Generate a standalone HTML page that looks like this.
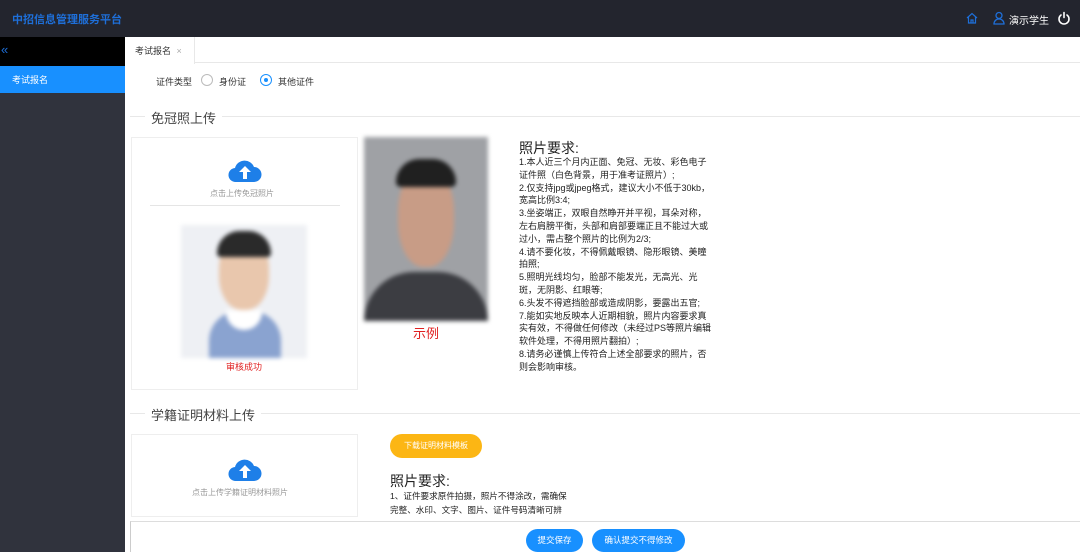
<!DOCTYPE html>
<html><head><meta charset="utf-8"><style>
*{margin:0;padding:0;box-sizing:border-box}
body{width:1080px;height:552px;overflow:hidden;background:#fff;font-family:"Liberation Sans","Noto Sans CJK SC",sans-serif;position:relative;font-size:9px;color:#333}
.a{position:absolute}
</style></head><body>
<div class="a" style="left:0;top:0;width:1080px;height:37px;background:#23252e"></div>
<div class="a" style="left:12px;top:11px;color:#1e6fd9;font-size:11px;font-weight:bold">中招信息管理服务平台</div>
<svg class="a" style="left:965px;top:11px" width="14" height="14" viewBox="0 0 14 14"><path d="M2 7L7 2.5 12 7M3.5 6v6h7V6M6 12V9h2v3" fill="none" stroke="#1e6fd9" stroke-width="1.2"/></svg>
<svg class="a" style="left:993px;top:11px" width="12" height="14" viewBox="0 0 12 14"><circle cx="6" cy="4.5" r="3" fill="none" stroke="#1e6fd9" stroke-width="1.3"/><path d="M1 13c0-3 2.2-5 5-5s5 2 5 5z" fill="none" stroke="#1e6fd9" stroke-width="1.3"/></svg>
<div class="a" style="left:1009px;top:12px;color:#fff;font-size:10px">演示学生</div>
<svg class="a" style="left:1057px;top:11px" width="14" height="14" viewBox="0 0 14 14"><path d="M4 4a5 5 0 1 0 6 0M7 1.5v5" fill="none" stroke="#fff" stroke-width="1.6" stroke-linecap="round"/></svg>
<div class="a" style="left:0;top:37px;width:125px;height:515px;background:#30333d"></div>
<div class="a" style="left:0;top:37px;width:125px;height:29px;background:#000"></div>
<div class="a" style="left:1px;top:42px;color:#1e6fd9;font-size:13px">«</div>
<div class="a" style="left:0;top:66px;width:125px;height:27px;background:#1890ff;color:#fff;padding:7px 12px;font-size:9px">考试报名</div>
<div class="a" style="left:125px;top:37px;width:955px;height:26px;border-bottom:1px solid #e8e8e8"></div>
<div class="a" style="left:125px;top:37px;width:70px;height:27px;background:#fff;border-right:1px solid #e8e8e8;padding:7px 10px;font-size:9px">考试报名 <span style="color:#aaa;margin-left:3px">×</span></div>
<div class="a" style="left:156px;top:75px;font-size:9px">证件类型</div>
<div class="a" style="left:201px;top:74px;width:12px;height:12px;border:1px solid #bbb;border-radius:50%"></div>
<div class="a" style="left:219px;top:75px">身份证</div>
<div class="a" style="left:260px;top:74px;width:12px;height:12px;border:1px solid #1890ff;border-radius:50%"><div style="width:4px;height:4px;background:#1890ff;border-radius:50%;margin:3px"></div></div>
<div class="a" style="left:278px;top:75px">其他证件</div>
<div class="a" style="left:130px;top:116px;width:950px;border-top:1px solid #e8e8e8"></div>
<div class="a" style="left:145px;top:108px;background:#fff;padding:0 6px;font-size:13px;color:#444">免冠照上传</div>
<div class="a" style="left:131px;top:137px;width:227px;height:253px;border:1px solid #eee"></div>
<svg class="a" style="left:228px;top:158px" width="34" height="26" viewBox="0 0 34 26"><path d="M8 24a7 7 0 0 1-1-14 10 10 0 0 1 19-1 7.5 7.5 0 0 1 0 15z" fill="#1e7fe8"/><path d="M17 8l-6 6h4v7h4v-7h4z" fill="#fff"/></svg>
<div class="a" style="left:210px;top:188px;color:#999;font-size:8px">点击上传免冠照片</div>
<div class="a" style="left:150px;top:205px;width:190px;border-top:1px solid #e5e5e5"></div>
<div class="a" style="left:181px;top:225px;width:126px;height:133px;background:#eef0f4;overflow:hidden;filter:blur(2px)">
<div class="a" style="left:28px;top:86px;width:72px;height:60px;background:#8aa3d0;border-radius:30px 30px 0 0"></div>
<div class="a" style="left:45px;top:85px;width:36px;height:20px;background:#fff;border-radius:0 0 18px 18px"></div>
<div class="a" style="left:38px;top:10px;width:50px;height:75px;background:#e9c7ad;border-radius:45%"></div>
<div class="a" style="left:36px;top:6px;width:54px;height:26px;background:#2a2a2a;border-radius:26px 26px 4px 4px"></div>
</div>
<div class="a" style="left:226px;top:360px;color:#e02020;font-size:9px">审核成功</div>
<div class="a" style="left:364px;top:137px;width:124px;height:184px;background:#9fa1a5;overflow:hidden;filter:blur(2px)">
<div class="a" style="left:0;top:135px;width:124px;height:60px;background:#3c3d42;border-radius:50px 50px 0 0"></div>
<div class="a" style="left:34px;top:30px;width:56px;height:100px;background:#c89c86;border-radius:45%"></div>
<div class="a" style="left:32px;top:22px;width:60px;height:28px;background:#202020;border-radius:30px 30px 6px 6px"></div>
</div>
<div class="a" style="left:413px;top:323px;color:#e02020;font-size:13px">示例</div>
<div class="a" style="left:519px;top:138px;font-size:14px;color:#222">照片要求:</div>
<div class="a" style="left:519px;top:156px;white-space:nowrap;font-size:9px;line-height:12.8px;color:#222">1.本人近三个月内正面、免冠、无妆、彩色电子<br>证件照（白色背景，用于准考证照片）;<br>2.仅支持jpg或jpeg格式，建议大小不低于30kb，<br>宽高比例3:4;<br>3.坐姿端正，双眼自然睁开并平视，耳朵对称，<br>左右肩膀平衡，头部和肩部要端正且不能过大或<br>过小，需占整个照片的比例为2/3;<br>4.请不要化妆，不得佩戴眼镜、隐形眼镜、美瞳<br>拍照;<br>5.照明光线均匀，脸部不能发光，无高光、光<br>斑，无阴影、红眼等;<br>6.头发不得遮挡脸部或造成阴影，要露出五官;<br>7.能如实地反映本人近期相貌，照片内容要求真<br>实有效，不得做任何修改（未经过PS等照片编辑<br>软件处理，不得用照片翻拍）;<br>8.请务必谨慎上传符合上述全部要求的照片，否<br>则会影响审核。</div>
<div class="a" style="left:130px;top:413px;width:950px;border-top:1px solid #e8e8e8"></div>
<div class="a" style="left:145px;top:405px;background:#fff;padding:0 6px;font-size:13px;color:#444">学籍证明材料上传</div>
<div class="a" style="left:131px;top:434px;width:227px;height:83px;border:1px solid #eee"></div>
<svg class="a" style="left:228px;top:457px" width="34" height="26" viewBox="0 0 34 26"><path d="M8 24a7 7 0 0 1-1-14 10 10 0 0 1 19-1 7.5 7.5 0 0 1 0 15z" fill="#1e7fe8"/><path d="M17 8l-6 6h4v7h4v-7h4z" fill="#fff"/></svg>
<div class="a" style="left:192px;top:487px;color:#999;font-size:8px">点击上传学籍证明材料照片</div>
<div class="a" style="left:390px;top:434px;width:92px;height:24px;background:#fcb614;border-radius:12px;color:#fff;font-size:8px;text-align:center;line-height:24px">下载证明材料模板</div>
<div class="a" style="left:390px;top:471px;font-size:14px;color:#222">照片要求:</div>
<div class="a" style="left:390px;top:489px;white-space:nowrap;font-size:8.6px;line-height:14px;color:#222">1、证件要求原件拍摄，照片不得涂改，需确保<br>完整、水印、文字、图片、证件号码清晰可辨</div>
<div class="a" style="left:130px;top:521px;width:950px;height:31px;background:#fff;border-top:1px solid #ddd;border-left:1px solid #ccc"></div>
<div class="a" style="left:526px;top:529px;width:57px;height:23px;background:#1890ff;border-radius:12px;color:#fff;font-size:8.5px;text-align:center;line-height:23px">提交保存</div>
<div class="a" style="left:592px;top:529px;width:93px;height:23px;background:#1890ff;border-radius:12px;color:#fff;font-size:8.5px;text-align:center;line-height:23px">确认提交不得修改</div>
</body></html>
